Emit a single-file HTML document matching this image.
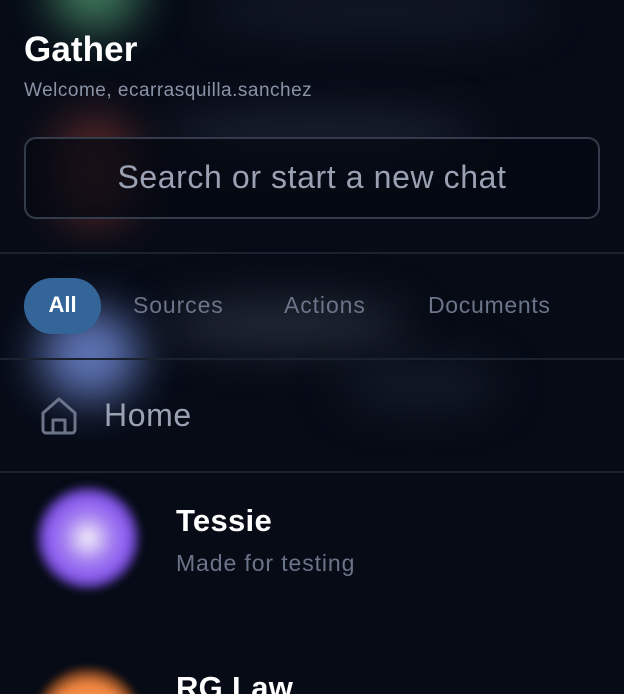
<!DOCTYPE html>
<html><head><style>
*{margin:0;padding:0;box-sizing:border-box}
html,body{width:624px;height:694px;overflow:hidden}
body{background:#060b16;font-family:"Liberation Sans",sans-serif}
#w{position:relative;width:624px;height:694px;overflow:hidden}
.b{position:absolute;border-radius:50%;filter:blur(22px)}
.t{position:absolute;white-space:nowrap}
.hr{position:absolute;left:0;width:624px;height:2px;background:#1a2230}
</style></head><body><div id="w">
<div class="b" style="left:50px;top:-50px;width:90px;height:80px;background:#3f7a5c"></div>
<div class="b" style="left:50px;top:115px;width:90px;height:110px;background:#6a2e2c;opacity:.8"></div>
<div class="b" style="left:40px;top:310px;width:100px;height:90px;background:#6076b8"></div>
<div class="b" style="left:160px;top:110px;width:320px;height:50px;background:#1f2633;opacity:.8"></div>
<div class="b" style="left:160px;top:300px;width:250px;height:50px;background:#232a36"></div>
<div class="b" style="left:200px;top:-20px;width:350px;height:60px;background:#141b27;opacity:.8"></div>
<div class="b" style="left:340px;top:360px;width:160px;height:50px;background:#141b27"></div>
<div class="t" style="left:24px;top:30px;font-size:35px;font-weight:bold;color:#fff;letter-spacing:0.1px">Gather</div>
<div class="t" style="left:24px;top:80px;font-size:19px;color:#8a93a6;letter-spacing:0.5px">Welcome, ecarrasquilla.sanchez</div>
<div style="position:absolute;left:24px;top:137px;width:576px;height:82px;border:2px solid #343c4b;border-radius:12px;background:rgba(4,8,18,.75)"></div>
<div class="t" style="left:24px;top:159px;width:576px;text-align:center;font-size:32px;color:#9aa1b2;letter-spacing:0.6px">Search or start a new chat</div>
<div class="hr" style="top:252px"></div>
<div style="position:absolute;left:24px;top:278px;width:77px;height:56px;border-radius:28px;background:#336599"></div>
<div class="t" style="left:24px;top:292px;width:77px;text-align:center;font-size:22px;font-weight:bold;color:#fff">All</div>
<div class="t" style="left:133px;top:292px;font-size:23px;color:#6b7488;letter-spacing:0.9px">Sources</div>
<div class="t" style="left:284px;top:292px;font-size:23px;color:#6b7488;letter-spacing:0.9px">Actions</div>
<div class="t" style="left:428px;top:292px;font-size:23px;color:#6b7488;letter-spacing:0.7px">Documents</div>
<div class="hr" style="top:358px"></div>
<svg style="position:absolute;left:40px;top:396px" width="38" height="40" viewBox="0 0 38 40" fill="none" stroke="#6b7488" stroke-width="3" stroke-linejoin="round"><path d="M3 17 L19 3 L35 17 V34 a3 3 0 0 1 -3 3 H6 a3 3 0 0 1 -3 -3 Z"/><path d="M13 37 V24 H25 V37"/></svg>
<div class="t" style="left:104px;top:397px;font-size:32px;color:#9aa1b2;letter-spacing:0.6px">Home</div>
<div class="hr" style="top:471px"></div>
<div style="position:absolute;left:36px;top:486px;width:104px;height:104px;border-radius:50%;filter:blur(4px);background:radial-gradient(circle at 50% 50%,#f2eefa 0%,#a07af0 35%,#8a5cf0 55%,rgba(70,40,150,.5) 72%,rgba(6,11,22,0) 95%)"></div>
<div class="t" style="left:176px;top:503px;font-size:31px;font-weight:bold;color:#fff;letter-spacing:0.3px">Tessie</div>
<div class="t" style="left:176px;top:550px;font-size:23px;color:#6b7488;letter-spacing:0.9px">Made for testing</div>
<div style="position:absolute;left:34px;top:668px;width:108px;height:108px;border-radius:50%;filter:blur(4px);background:radial-gradient(circle,#f6a060 0%,#f08540 50%,rgba(150,70,20,.5) 70%,rgba(6,11,22,0) 95%)"></div>
<div class="t" style="left:176px;top:670px;font-size:31px;font-weight:bold;color:#fff;letter-spacing:0.3px">RG Law</div>
</div></body></html>
